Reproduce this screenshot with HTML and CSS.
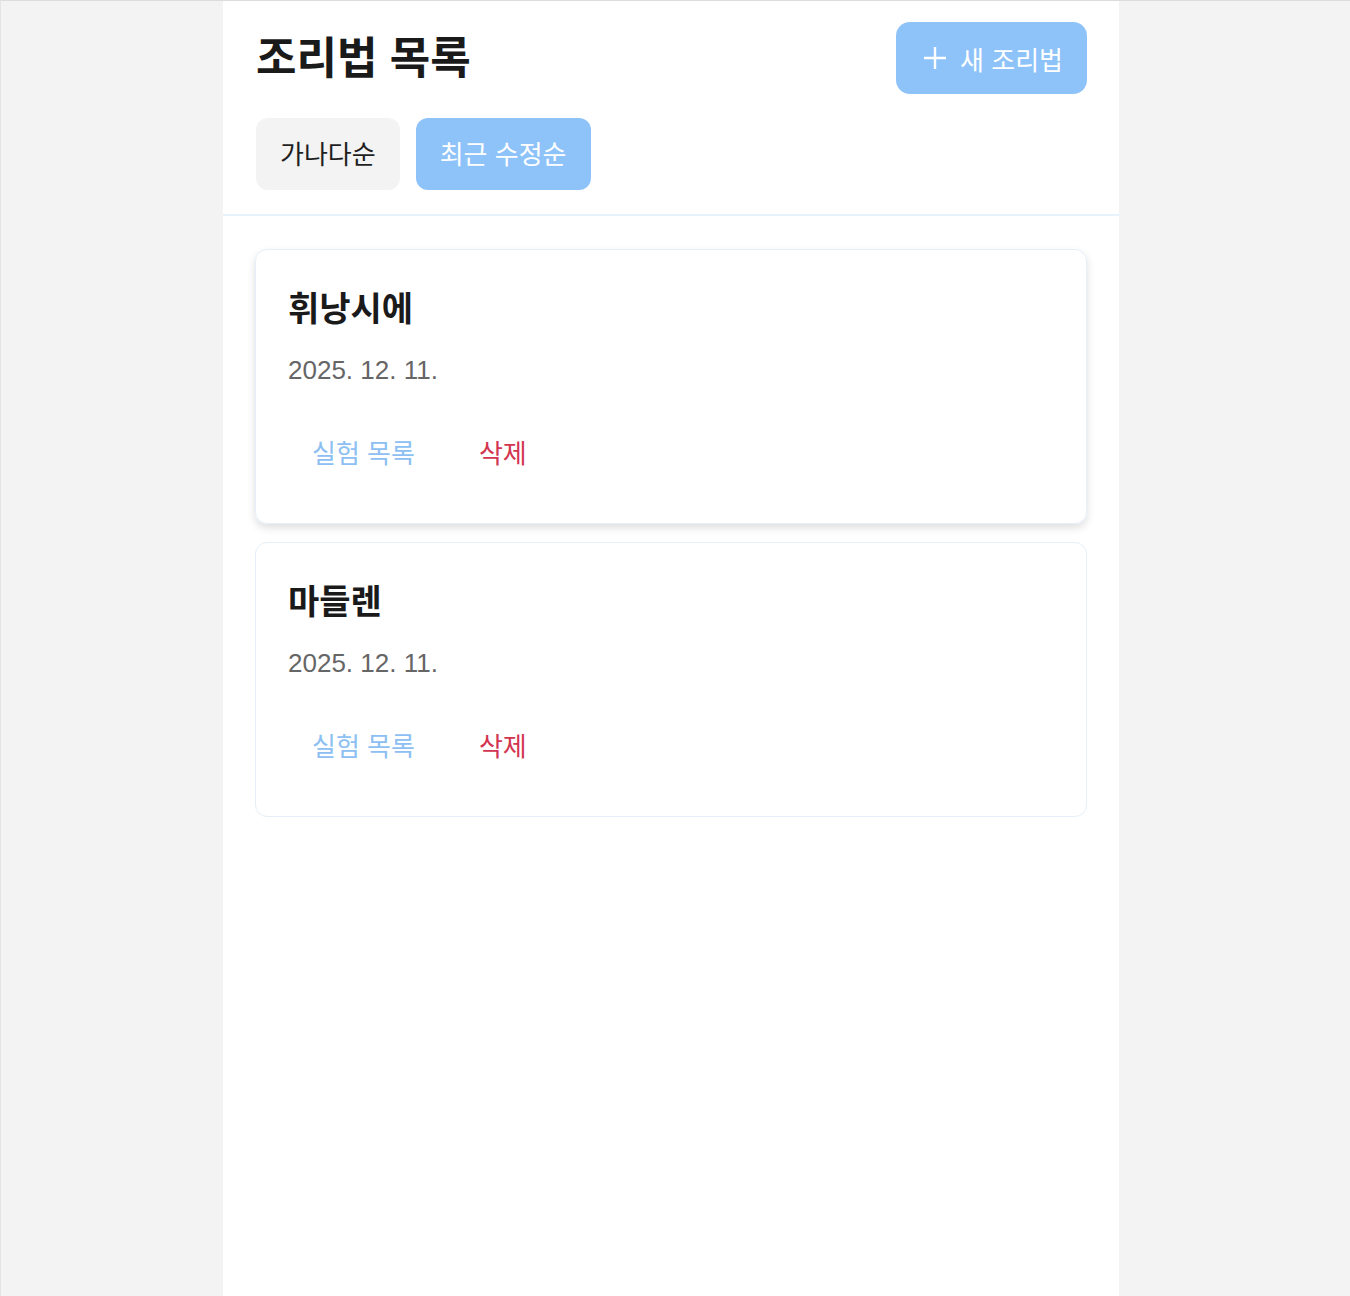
FILE: index.html
```html
<!DOCTYPE html>
<html lang="ko">
<head>
  <meta charset="UTF-8">
  <title>조리법 목록</title>
  <link rel="stylesheet" href="styles.css">
</head>
<body>
  <div class="page">
    <header class="header">
      <div class="header-top">
        <h1>조리법 목록</h1>
        <button class="btn-new">
          <svg width="26" height="26" viewBox="0 0 26 26"><path d="M13 2v22M2 13h22" stroke="#fff" stroke-width="2.4" fill="none"/></svg>
          새 조리법
        </button>
      </div>
      <div class="sort">
        <button class="sort-btn">가나다순</button>
        <button class="sort-btn active">최근 수정순</button>
      </div>
    </header>

    <main class="list">
      <div class="card hover">
        <h2>휘낭시에</h2>
        <p class="date">2025. 12. 11.</p>
        <div class="actions">
          <button class="link">실험 목록</button>
          <button class="link danger">삭제</button>
        </div>
      </div>
      <div class="card">
        <h2>마들렌</h2>
        <p class="date">2025. 12. 11.</p>
        <div class="actions">
          <button class="link">실험 목록</button>
          <button class="link danger">삭제</button>
        </div>
      </div>
    </main>
  </div>
</body>
</html>
```

FILE: styles.css
```css
html, body { margin: 0; height: 100%; }
body { background: #f3f3f3; font-family: "Liberation Sans", "Noto Sans CJK KR", sans-serif; padding-right: 9px; box-sizing: border-box; border-top: 1px solid #dcdcdc; border-left: 1px solid #e4e4e4; }
.page { width: 896px; min-height: 100%; margin: 0 auto; background: #fff; }
button { font-family: inherit; border: none; cursor: pointer; }

.header { padding: 21px 32px 24px 33px; border-bottom: 2px solid #e6f2fc; }
.header-top { display: flex; justify-content: space-between; align-items: center; }
h1 { margin: 0; padding-bottom: 6px; font-size: 44px; font-weight: 700; color: #1a1a1a; }
.btn-new { display: flex; align-items: center; gap: 12px; height: 72px; padding: 0 24px 0 26px; border-radius: 14px; background: #8ec3fa; color: #fff; font-size: 26px; }
.sort { display: flex; gap: 16px; margin-top: 24px; }
.sort-btn { height: 72px; padding: 0 24px 4px; border-radius: 12px; background: #f3f3f3; color: #1f1f1f; font-size: 26px; }
.sort-btn.active { background: #8ec3fa; color: #fff; }

.list { display: flex; flex-direction: column; gap: 18px; padding: 33px 32px; }
.card { border: 1px solid #e4effa; border-radius: 12px; padding: 31px 32px 32px; }
.card.hover { box-shadow: 0 4px 8px rgba(0, 0, 0, 0.13); }
.card h2 { margin: 0; font-size: 34px; line-height: 56px; font-weight: 700; color: #1a1a1a; }
.date { margin: 14px 0 0; font-size: 26px; line-height: 39px; color: #666; }
.actions { display: flex; gap: 16px; margin-top: 28px; }
.link { background: none; padding: 17px 24px; font-size: 26px; line-height: 39px; color: #8dbff2; }
.link.danger { color: #d3344f; }
```
